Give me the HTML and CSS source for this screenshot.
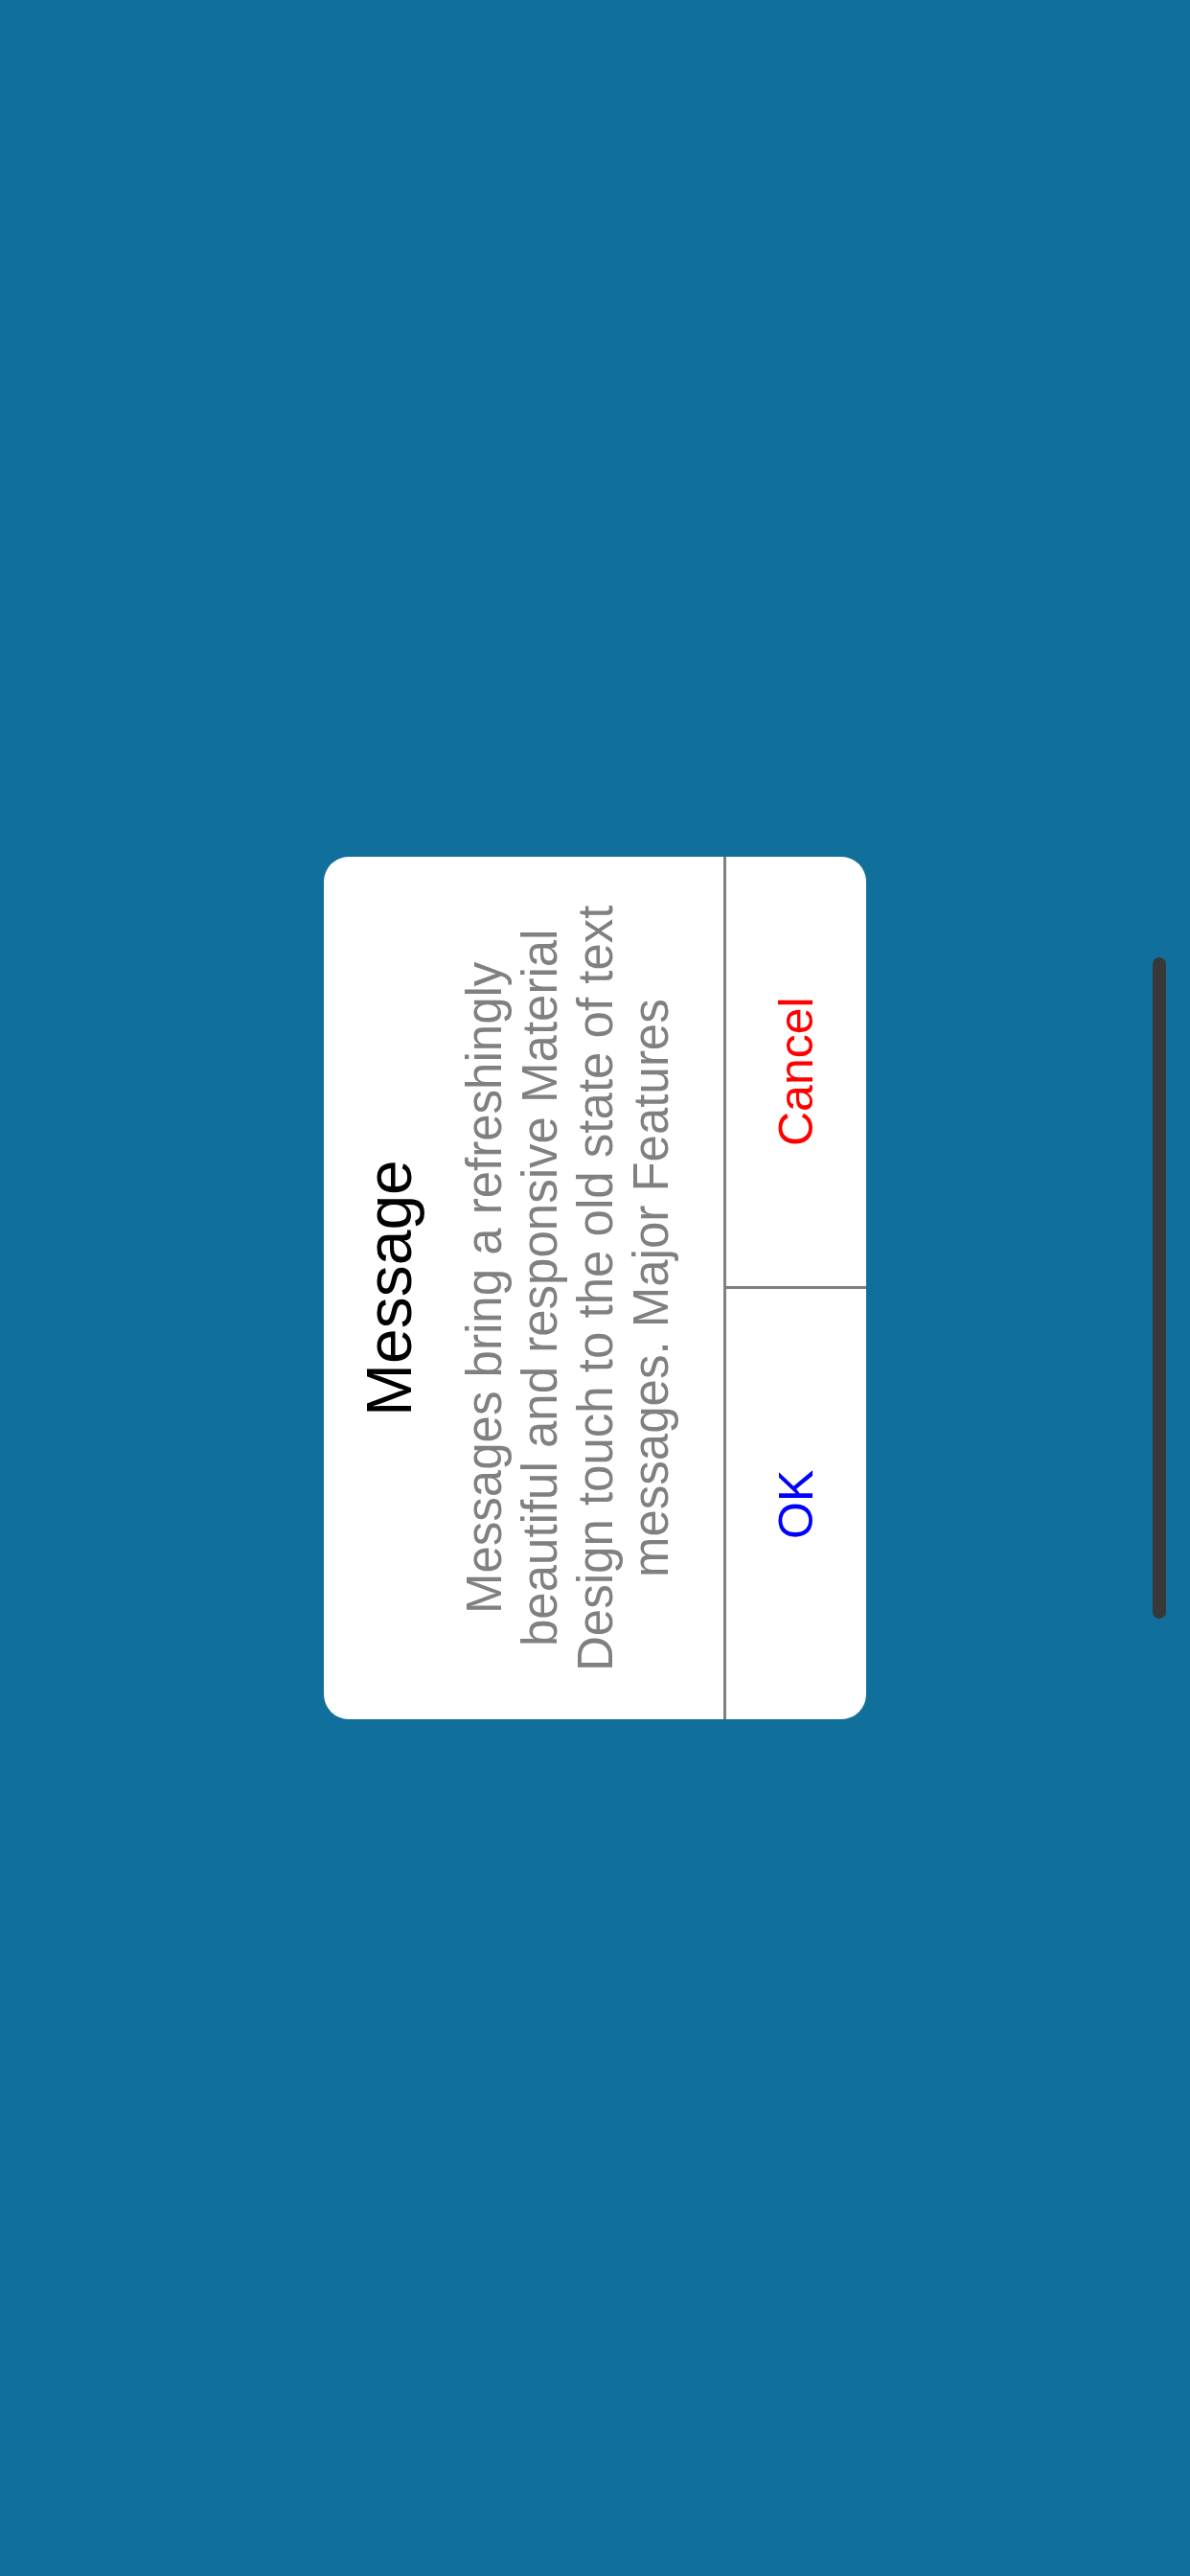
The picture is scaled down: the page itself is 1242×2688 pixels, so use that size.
FILE: index.html
```html
<!DOCTYPE html>
<html>
<head>
  <title>Message</title>
  <meta name="viewport" content="width=device-width, initial-scale=1.0">
  <link rel="stylesheet" href="styles.css">
</head>
<body>
  <!-- landscape screen: vertical writing mode turned half way round -->
  <div class="screen">
    <div class="dialog">
      <div class="dialog-content">
        <h1 class="dialog-title">Message</h1>
        <p class="dialog-text">Messages bring a refreshingly beautiful and responsive Material Design touch to the old state of text messages. Major Features</p>
      </div>
      <div class="dialog-actions">
        <div class="action action-ok">OK</div>
        <div class="action action-cancel">Cancel</div>
      </div>
    </div>
    <div class="home-bar"></div>
  </div>
</body>
</html>
```

FILE: styles.css
```css
:root {
  --screen-bg: #116f9c;
  --line-gray: #808080;
  --text-gray: #808080;
  --home-bar: #383838;
}

* {
  margin: 0;
  padding: 0;
  box-sizing: border-box;
}

html,
body {
  width: 1242px;
  height: 2688px;
  overflow: hidden;
}

body {
  background: var(--screen-bg);
  font-family: 'Liberation Sans', Arial, Helvetica, sans-serif;
}

.screen {
  width: 1242px;
  height: 2688px;
  writing-mode: vertical-rl;
  text-orientation: sideways;
  transform: rotate(180deg);
  display: flex;
  align-items: center;
  justify-content: center;
  position: relative;
}

.dialog {
  inline-size: 900px;
  block-size: 566px;
  background: #fff;
  border-radius: 26px;
  display: flex;
  flex-direction: column;
  overflow: hidden;
}

.dialog-content {
  block-size: 417px;
  padding-block-start: 30px;
  padding-inline: 24px;
  text-align: center;
}

.dialog-title {
  font-size: 66px;
  line-height: 76px;
  font-weight: normal;
  color: #000;
}

.dialog-text {
  margin-block-start: 33px;
  font-size: 51px;
  line-height: 58px;
  color: var(--text-gray);
}

.dialog-actions {
  flex: 1;
  display: flex;
  border-block-start: 3px solid var(--line-gray);
}

.action {
  flex: 1;
  display: flex;
  align-items: center;
  justify-content: center;
  font-size: 50px;
  line-height: 58px;
  cursor: pointer;
}

.action-ok {
  color: #0000ff;
}

.action-cancel {
  color: #ff0000;
  border-inline-start: 3px solid var(--line-gray);
}

.home-bar {
  position: absolute;
  inset-block-end: 25px;
  inset-inline-start: 999px;
  inline-size: 690px;
  block-size: 14px;
  border-radius: 7px;
  background: var(--home-bar);
}
```
